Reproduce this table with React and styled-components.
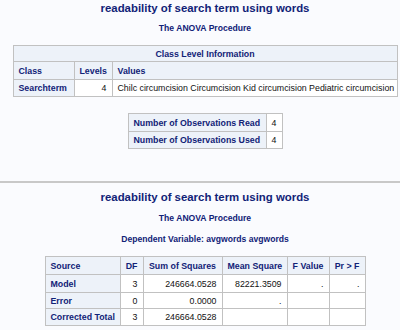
import React from 'react'
import styled, { createGlobalStyle } from 'styled-components'

const GlobalStyle = createGlobalStyle`
  html, body {
    margin: 0;
    padding: 0;
    background: #fafbfe;
  }
  body {
    overflow: hidden;
    font-family: "Liberation Sans", Arial, sans-serif;
  }
`

const Page = styled.div`
  width: 410px;
  display: flex;
  flex-direction: column;
  align-items: center;
`

const Section = styled.section`
  width: 100%;
  display: flex;
  flex-direction: column;
  align-items: center;
  padding-top: ${p => p.$top}px;
`

const Title = styled.h1`
  margin: 0;
  font-size: 11.4px;
  line-height: 13px;
  font-weight: bold;
  color: #112277;
`

const Subtitle = styled.h2`
  margin: ${p => p.$gap}px 0 0;
  font-size: 8.6px;
  line-height: 10px;
  font-weight: bold;
  color: #112277;
`

const Divider = styled.hr`
  width: 100%;
  margin: 32px 0 0;
  border: 0;
  border-top: 2px solid #c8c8c8;
`

const Table = styled.table`
  margin-top: ${p => p.$gap}px;
  width: ${p => p.$width}px;
  border-collapse: collapse;
  table-layout: fixed;
  border: 1px solid #c1c1c1;
  font-size: 8.8px;
`

const Row = styled.tr`
  height: ${p => p.$h || 17}px;
`

const Th = styled.th`
  background: #edf2f9;
  color: #112277;
  font-weight: bold;
  border: 1px solid #c1c1c1;
  padding: 0 5px;
  text-align: ${p => p.$align || 'left'};
  white-space: nowrap;
  overflow: hidden;
`

const Td = styled.td`
  background: #ffffff;
  color: #111111;
  border: 1px solid #c1c1c1;
  padding: 0 5px;
  text-align: ${p => p.$align || 'right'};
  white-space: nowrap;
  overflow: hidden;
`

const anova = [
  { source: 'Model', df: '3', ss: '246664.0528', ms: '82221.3509', f: '.', p: '.', h: 18 },
  { source: 'Error', df: '0', ss: '0.0000', ms: '.', f: '', p: '', h: 16 },
  { source: 'Corrected Total', df: '3', ss: '246664.0528', ms: '', f: '', p: '', h: 17 },
]

const App = () => {
  return (
    <Page>
      <GlobalStyle />
      <Section $top={2}>
        <Title>readability of search term using words</Title>
        <Subtitle $gap={8}>The ANOVA Procedure</Subtitle>
        <Table $gap={12} $width={385}>
          <colgroup>
            <col style={{ width: 61 }} />
            <col style={{ width: 38 }} />
            <col />
          </colgroup>
          <tbody>
            <Row $h={16}>
              <Th colSpan={3} $align="center">Class Level Information</Th>
            </Row>
            <Row $h={18}>
              <Th>Class</Th>
              <Th $align="center">Levels</Th>
              <Th>Values</Th>
            </Row>
            <Row>
              <Th>Searchterm</Th>
              <Td>4</Td>
              <Td $align="left">Chilc circumcision Circumcision Kid circumcision Pediatric circumcision</Td>
            </Row>
          </tbody>
        </Table>
        <Table $gap={16} $width={155}>
          <colgroup>
            <col style={{ width: 138 }} />
            <col />
          </colgroup>
          <tbody>
            <Row $h={18}>
              <Th>Number of Observations Read</Th>
              <Td>4</Td>
            </Row>
            <Row>
              <Th>Number of Observations Used</Th>
              <Td>4</Td>
            </Row>
          </tbody>
        </Table>
      </Section>
      <Divider />
      <Section $top={8}>
        <Title>readability of search term using words</Title>
        <Subtitle $gap={9}>The ANOVA Procedure</Subtitle>
        <Subtitle $gap={11}>Dependent Variable: avgwords avgwords</Subtitle>
        <Table $gap={12} $width={321}>
          <colgroup>
            <col style={{ width: 75 }} />
            <col style={{ width: 23 }} />
            <col style={{ width: 79 }} />
            <col style={{ width: 65 }} />
            <col style={{ width: 42 }} />
            <col />
          </colgroup>
          <tbody>
            <Row $h={18}>
              <Th>Source</Th>
              <Th $align="center">DF</Th>
              <Th $align="center">Sum of Squares</Th>
              <Th $align="center">Mean Square</Th>
              <Th $align="center">F Value</Th>
              <Th $align="center">Pr &gt; F</Th>
            </Row>
            {anova.map(r => (
              <Row key={r.source} $h={r.h}>
                <Th>{r.source}</Th>
                <Td>{r.df}</Td>
                <Td>{r.ss}</Td>
                <Td>{r.ms}</Td>
                <Td>{r.f}</Td>
                <Td>{r.p}</Td>
              </Row>
            ))}
          </tbody>
        </Table>
      </Section>
    </Page>
  )
}

export default App
